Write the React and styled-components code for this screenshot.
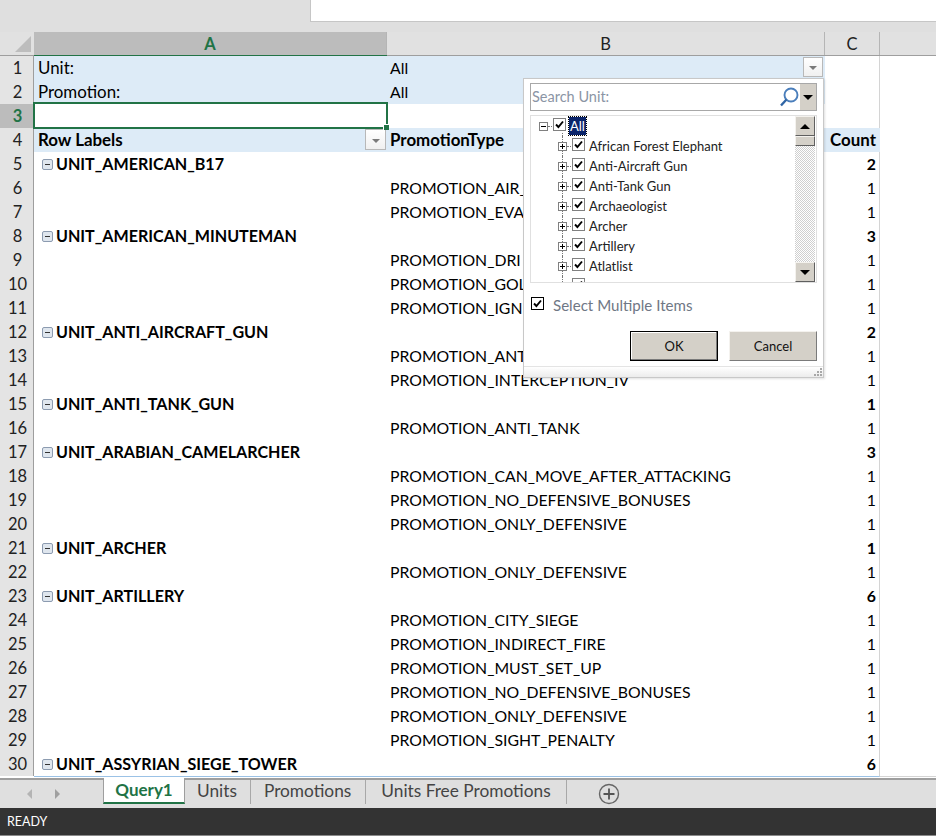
import React from 'react';
import styled, { createGlobalStyle } from 'styled-components';

const GlobalStyle = createGlobalStyle`
  html, body {
    margin: 0;
    padding: 0;
    background: #fff;
  }
  body {
    font-family: Lato, "Open Sans", sans-serif;
    color: #000;
  }
`;

const Page = styled.div`
  width: 936px;
  height: 836px;
  overflow: hidden;
  position: relative;
  display: flex;
  flex-direction: column;
`;

const TopBar = styled.div`
  height: 32px;
  flex: none;
  background: #dfdfdf;
  padding-left: 310px;
`;

const FormulaBox = styled.div`
  height: 21px;
  background: #fff;
  border-left: 1px solid #c6c6c6;
  border-bottom: 1px solid #c6c6c6;
`;

const HeaderRow = styled.div`
  height: 24px;
  flex: none;
  display: grid;
  grid-template-columns: 34px 353px 438px 55px 1fr;
  background: #e1e1e1;
  border-bottom: 1px solid #9e9e9e;
  box-sizing: border-box;
`;

const Corner = styled.div`
  display: flex;
  align-items: flex-end;
  justify-content: flex-end;
  padding: 0 3px 3px 0;
  background: #e1e1e1;
`;

const ColHead = styled.div`
  display: flex;
  align-items: center;
  justify-content: center;
  font-size: 16.5px;
  border-right: 1px solid #b5b5b5;
  box-sizing: border-box;
  color: ${p => (p.$active ? '#217346' : '#222')};
  font-weight: ${p => (p.$active ? 700 : 400)};
  background: ${p => (p.$active ? '#bcbcbc' : '#e1e1e1')};
  ${p => p.$active && 'box-shadow: 0 1px 0 0 #217346; height: 23px;'}
  ${p => p.$last && 'border-right: 0;'}
`;

const Rows = styled.div`
  flex: none;
`;

const Row = styled.div`
  height: 24px;
  display: grid;
  grid-template-columns: 34px 353px 438px 55px 1fr;
  font-size: 15.8px;
  line-height: 24px;
`;

const RowHead = styled.div`
  text-align: center;
  font-size: 16.5px;
  box-sizing: border-box;
  border-right: 1px solid #9e9e9e;
  border-bottom: 1px solid #c6c6c6;
  padding-left: 2px;
  color: ${p => (p.$active ? '#217346' : '#222')};
  font-weight: ${p => (p.$active ? 700 : 400)};
  background: ${p => (p.$active ? '#bcbcbc' : '#e4e4e4')};
`;

const Cell = styled.div`
  position: relative;
  box-sizing: border-box;
  white-space: nowrap;
  padding: 0 ${p => (p.$large ? 4 : 3)}px 0 ${p => (p.$first ? 4 : 3)}px;
  background: ${p => (p.$blue ? '#ddebf7' : '#fff')};
  font-weight: ${p => (p.$bold ? 700 : 400)};
  ${p => p.$large && 'font-size: 16.9px;'}
  text-align: ${p => (p.$right ? 'right' : 'left')};
  border-bottom: 1px solid ${p => (p.$line ? '#9bc2e6' : p.$grid ? '#d4d4d4' : 'transparent')};
  ${p => p.$divide && 'border-right: 1px solid #d4d4d4;'}
`;

const GroupLabel = styled.div`
  display: flex;
  align-items: center;
  gap: 3px;
  padding-left: 4px;
  font-size: 16.1px;
`;

const Collapse = styled.span`
  width: 11px;
  height: 11px;
  box-sizing: border-box;
  flex: none;
  border: 1px solid #8c9bb0;
  border-radius: 2px;
  background: #dfe6ee;
  display: flex;
  align-items: center;
  justify-content: center;
  &::before {
    content: '';
    width: 5px;
    height: 1px;
    background: #333;
  }
`;

const Selection = styled.div`
  position: absolute;
  z-index: 2;
  left: -1px;
  right: -1px;
  top: -2px;
  bottom: -1px;
  border: 2px solid #217346;
  &::after {
    content: '';
    position: absolute;
    right: -3px;
    bottom: -3px;
    width: 5px;
    height: 5px;
    background: #217346;
    border: 1px solid #fff;
    border-right: 0;
    border-bottom: 0;
  }
`;

const FilterButton = styled.div`
  position: absolute;
  z-index: 1;
  right: ${p => (p.$large ? 1 : 2)}px;
  top: 1px;
  width: ${p => (p.$large ? 21 : 20)}px;
  height: ${p => (p.$large ? 21 : 20)}px;
  box-sizing: border-box;
  background: linear-gradient(#fff, #f0f0f0);
  border: 1px solid #b8b8b8;
  display: flex;
  align-items: center;
  justify-content: center;
  &::before {
    content: '';
    margin-top: 2px;
    border-left: 4px solid transparent;
    border-right: 4px solid transparent;
    border-top: 4px solid #7a7a7a;
  }
`;

const Spacer = styled.div`
  flex: 1;
  background: #fff;
`;

const TabBar = styled.div`
  height: 30px;
  flex: none;
  display: flex;
  align-items: stretch;
  background: #dfdfdf;
  border-top: 2px solid #9e9e9e;
  box-sizing: border-box;
  font-size: 17.3px;
  color: #444;
`;

const NavArrows = styled.div`
  width: 103px;
  display: flex;
  align-items: center;
  padding-left: 27px;
  gap: 23px;
  box-sizing: border-box;
`;

const Arrow = styled.span`
  width: 0;
  height: 0;
  border-top: 5px solid transparent;
  border-bottom: 5px solid transparent;
  ${p => (p.$left ? 'border-right: 5px solid #b4b4b4;' : 'border-left: 5px solid #a0a0a0;')}
`;

const ActiveTab = styled.div`
  width: 82px;
  height: 26px;
  margin-top: -2px;
  box-sizing: border-box;
  background: #fff;
  border-left: 1px solid #9e9e9e;
  border-right: 1px solid #9e9e9e;
  border-bottom: 2px solid #217346;
  color: #217346;
  font-weight: 700;
  font-size: 17px;
  text-align: center;
  line-height: 24px;
`;

const Tab = styled.div`
  display: flex;
  align-items: center;
  height: 24px;
  padding: 0 ${p => p.$right}px 3px ${p => p.$left}px;
  box-sizing: border-box;
  border-right: 1px solid #a8a8a8;
  align-self: flex-start;
`;

const AddSheet = styled.div`
  margin-left: 31px;
  display: flex;
  align-items: center;
`;

const StatusBar = styled.div`
  height: 28px;
  flex: none;
  box-sizing: border-box;
  background: #333;
  border-bottom: 1px solid #8a8a8a;
  color: #fff;
  font-size: 12.5px;
  line-height: 27px;
  padding-left: 7px;
`;

const Popup = styled.div`
  position: absolute;
  z-index: 3;
  left: 523px;
  top: 78px;
  width: 301px;
  height: 300px;
  box-sizing: border-box;
  background: #fff;
  border: 1px solid #c8c8c8;
  box-shadow: 1px 1px 2px rgba(0, 0, 0, 0.12);
  display: flex;
  flex-direction: column;
  padding: 4px 6px 0;
  font-size: 13px;
  color: #222;
`;

const SearchBox = styled.div`
  height: 28px;
  flex: none;
  box-sizing: border-box;
  border: 1px solid #a8a8a8;
  display: flex;
  align-items: center;
  padding-left: 1px;
  color: #8b95a5;
  font-size: 14.5px;
`;

const SearchText = styled.span`
  flex: 1;
  margin-top: -2px;
`;

const SearchDrop = styled.div`
  width: 16px;
  height: 26px;
  margin-left: 1px;
  background: #d4d0c8;
  display: flex;
  align-items: center;
  justify-content: center;
  &::before {
    content: '';
    border-left: 5px solid transparent;
    border-right: 5px solid transparent;
    border-top: 5px solid #000;
  }
`;

const ListBox = styled.div`
  margin-top: 4px;
  height: 168px;
  flex: none;
  box-sizing: border-box;
  border: 1px solid #e0e0e0;
  display: flex;
  overflow: hidden;
`;

const Tree = styled.div`
  flex: 1;
  overflow: hidden;
`;

const TreeRow = styled.div`
  height: 20px;
  position: relative;
  display: flex;
  align-items: center;
  padding-left: ${p => (p.$root ? 8 : 27)}px;
  &::before {
    content: '';
    position: absolute;
    left: 31px;
    top: ${p => (p.$root ? 17 : 0)}px;
    bottom: 0;
    border-left: 1px dotted #777;
  }
`;

const Expander = styled.span`
  position: relative;
  z-index: 1;
  width: 9px;
  height: 9px;
  flex: none;
  box-sizing: border-box;
  border: 1px solid #808080;
  background: #fff;
  display: flex;
  align-items: center;
  justify-content: center;
  &::before {
    content: '';
    width: 5px;
    height: 1px;
    background: #000;
  }
  ${p => p.$plus && `
    &::after {
      content: '';
      position: absolute;
      left: 3px;
      top: 1px;
      width: 1px;
      height: 5px;
      background: #000;
    }
  `}
`;

const Connector = styled.span`
  width: 4px;
  flex: none;
  border-top: 1px dotted #777;
  margin-right: 1px;
`;

const CheckBox = styled.span`
  width: 13px;
  height: 13px;
  flex: none;
  box-sizing: border-box;
  border: 1px solid ${p => (p.$dark ? '#000' : '#808080')};
  background: #fff;
  display: flex;
  align-items: center;
  justify-content: center;
  margin-top: -3px;
`;

const ItemLabel = styled.span`
  margin-left: 4px;
  white-space: nowrap;
  ${p => p.$selected && `
    margin-left: 3px;
    padding: 0 1px;
    line-height: 18px;
    background: #0a246a;
    color: #fff;
    outline: 1px dotted #000;
  `}
`;

const ScrollBar = styled.div`
  width: 20px;
  flex: none;
  margin-right: 1px;
  display: flex;
  flex-direction: column;
  background-color: #e8e8e8;
  background-image: repeating-conic-gradient(#cfcfcf 0 25%, #fff 0 50%);
  background-size: 2px 2px;
`;

const ScrollButton = styled.div`
  height: 20px;
  flex: none;
  box-sizing: border-box;
  background: #d4d0c8;
  border: 1px solid;
  border-color: #f4f2ee #5f5f5f #5f5f5f #f4f2ee;
  display: flex;
  align-items: center;
  justify-content: center;
  &::before {
    content: '';
    border-left: 5px solid transparent;
    border-right: 5px solid transparent;
    ${p => (p.$up ? 'border-bottom: 5px solid #000;' : 'border-top: 5px solid #000;')}
  }
`;

const ScrollThumb = styled.div`
  height: 10px;
  flex: none;
  box-sizing: border-box;
  background: #d4d0c8;
  border: 1px solid;
  border-color: #f4f2ee #5f5f5f #5f5f5f #f4f2ee;
`;

const ScrollTrack = styled.div`
  flex: 1;
`;

const MultiRow = styled.div`
  display: flex;
  align-items: center;
  gap: 9px;
  margin-top: 14px;
  padding-left: 1px;
  font-size: 15.1px;
  color: #6f7785;
  height: 16px;
`;

const Buttons = styled.div`
  display: flex;
  justify-content: flex-end;
  gap: 11px;
  margin-top: 18px;
`;

const DialogButton = styled.div`
  width: 88px;
  height: 30px;
  box-sizing: border-box;
  background: #d4d0c8;
  font-size: 13px;
  color: #111;
  display: flex;
  align-items: center;
  justify-content: center;
  border: 1px solid;
  border-color: #f4f2ee #7a7a7a #7a7a7a #f4f2ee;
  ${p => p.$default && 'outline: 1px solid #000; outline-offset: -1px; border-color: #000; box-shadow: inset -1px -1px 0 #7a7a7a, inset 1px 1px 0 #fff;'}
`;

const Grip = styled.div`
  position: absolute;
  left: 0;
  right: 0;
  bottom: 0;
  height: 10px;
  border-top: 1px solid #e4e4e4;
  background: linear-gradient(#fff, #ececec);
  display: flex;
  justify-content: flex-end;
`;

const Check = () => (
  <svg width="9" height="9" viewBox="0 0 9 9">
    <path d="M1 4.5 L3.4 7 L8 1.5" fill="none" stroke="#000" strokeWidth="1.9" />
  </svg>
);

const GROUP = 'group';
const data = [
  [GROUP, 'UNIT_AMERICAN_B17', 2],
  ['PROMOTION_AIR_', 1],
  ['PROMOTION_EVA', 1],
  [GROUP, 'UNIT_AMERICAN_MINUTEMAN', 3],
  ['PROMOTION_DRI', 1],
  ['PROMOTION_GOL', 1],
  ['PROMOTION_IGN', 1],
  [GROUP, 'UNIT_ANTI_AIRCRAFT_GUN', 2],
  ['PROMOTION_ANT', 1],
  ['PROMOTION_INTERCEPTION_IV', 1],
  [GROUP, 'UNIT_ANTI_TANK_GUN', 1],
  ['PROMOTION_ANTI_TANK', 1],
  [GROUP, 'UNIT_ARABIAN_CAMELARCHER', 3],
  ['PROMOTION_CAN_MOVE_AFTER_ATTACKING', 1],
  ['PROMOTION_NO_DEFENSIVE_BONUSES', 1],
  ['PROMOTION_ONLY_DEFENSIVE', 1],
  [GROUP, 'UNIT_ARCHER', 1],
  ['PROMOTION_ONLY_DEFENSIVE', 1],
  [GROUP, 'UNIT_ARTILLERY', 6],
  ['PROMOTION_CITY_SIEGE', 1],
  ['PROMOTION_INDIRECT_FIRE', 1],
  ['PROMOTION_MUST_SET_UP', 1],
  ['PROMOTION_NO_DEFENSIVE_BONUSES', 1],
  ['PROMOTION_ONLY_DEFENSIVE', 1],
  ['PROMOTION_SIGHT_PENALTY', 1],
  [GROUP, 'UNIT_ASSYRIAN_SIEGE_TOWER', 6],
];

const units = [
  'African Forest Elephant',
  'Anti-Aircraft Gun',
  'Anti-Tank Gun',
  'Archaeologist',
  'Archer',
  'Artillery',
  'Atlatlist',
  '',
];

function DataRow({ number, row }) {
  if (row[0] === GROUP) {
    return (
      <Row>
        <RowHead>{number}</RowHead>
        <Cell $first $bold $line>
          <GroupLabel>
            <Collapse />
            {row[1]}
          </GroupLabel>
        </Cell>
        <Cell $line />
        <Cell $bold $right $line $divide>{row[2]}</Cell>
        <Cell $grid />
      </Row>
    );
  }
  return (
    <Row>
      <RowHead>{number}</RowHead>
      <Cell />
      <Cell>{row[0]}</Cell>
      <Cell $right $divide>{row[1]}</Cell>
      <Cell $grid />
    </Row>
  );
}

export default function App() {
  return (
    <Page>
      <GlobalStyle />
      <TopBar>
        <FormulaBox />
      </TopBar>
      <HeaderRow>
        <Corner>
          <svg width="16" height="16" viewBox="0 0 16 16">
            <path d="M16 0 V16 H0 Z" fill="#bdbdbd" />
          </svg>
        </Corner>
        <ColHead $active>A</ColHead>
        <ColHead>B</ColHead>
        <ColHead>C</ColHead>
        <ColHead $last />
      </HeaderRow>
      <Rows>
        <Row>
          <RowHead>1</RowHead>
          <Cell $first $blue $large>Unit:</Cell>
          <Cell $blue>
            All
            <FilterButton />
          </Cell>
          <Cell $grid $divide />
          <Cell $grid />
        </Row>
        <Row>
          <RowHead>2</RowHead>
          <Cell $first $blue $large>Promotion:</Cell>
          <Cell $blue>All</Cell>
          <Cell $grid $divide />
          <Cell $grid />
        </Row>
        <Row>
          <RowHead $active>3</RowHead>
          <Cell>
            <Selection />
          </Cell>
          <Cell $grid />
          <Cell $grid $divide />
          <Cell $grid />
        </Row>
        <Row>
          <RowHead>4</RowHead>
          <Cell $first $blue $bold $line $large>
            Row Labels
            <FilterButton $large />
          </Cell>
          <Cell $blue $bold $line $large>PromotionType</Cell>
          <Cell $blue $bold $right $line $large>Count</Cell>
          <Cell $grid />
        </Row>
        {data.map((row, i) => (
          <DataRow key={i} number={i + 5} row={row} />
        ))}
      </Rows>
      <Spacer />
      <TabBar>
        <NavArrows>
          <Arrow $left />
          <Arrow />
        </NavArrows>
        <ActiveTab>Query1</ActiveTab>
        <Tab $left={12} $right={13}>Units</Tab>
        <Tab $left={13} $right={14}>Promotions</Tab>
        <Tab $left={15} $right={15}>Units Free Promotions</Tab>
        <AddSheet>
          <svg width="22" height="22" viewBox="0 0 22 22">
            <circle cx="11" cy="11" r="9.5" fill="none" stroke="#666" strokeWidth="1.4" />
            <path d="M11 5.5 V16.5 M5.5 11 H16.5" stroke="#555" strokeWidth="1.8" />
          </svg>
        </AddSheet>
      </TabBar>
      <StatusBar>READY</StatusBar>
      <Popup>
        <SearchBox>
          <SearchText>Search Unit:</SearchText>
          <svg width="20" height="20" viewBox="0 0 20 20">
            <circle cx="12" cy="8" r="6.5" fill="none" stroke="#4a7ebb" strokeWidth="1.9" />
            <path d="M7.5 12.5 L2 18.5" stroke="#2f65a5" strokeWidth="2.4" />
          </svg>
          <SearchDrop />
        </SearchBox>
        <ListBox>
          <Tree>
            <TreeRow $root>
              <Expander />
              <Connector />
              <CheckBox><Check /></CheckBox>
              <ItemLabel $selected>All</ItemLabel>
            </TreeRow>
            {units.map((unit, i) => (
              <TreeRow key={i}>
                <Expander $plus />
                <Connector />
                <CheckBox><Check /></CheckBox>
                <ItemLabel>{unit}</ItemLabel>
              </TreeRow>
            ))}
          </Tree>
          <ScrollBar>
            <ScrollButton $up />
            <ScrollThumb />
            <ScrollTrack />
            <ScrollButton />
          </ScrollBar>
        </ListBox>
        <MultiRow>
          <CheckBox $dark><Check /></CheckBox>
          Select Multiple Items
        </MultiRow>
        <Buttons>
          <DialogButton $default>OK</DialogButton>
          <DialogButton>Cancel</DialogButton>
        </Buttons>
        <Grip>
          <svg width="10" height="9" viewBox="0 0 10 9">
            <path d="M7 1h2v2H7zM4 4h2v2H4zM7 4h2v2H7zM1 7h2v2H1zM4 7h2v2H4zM7 7h2v2H7z" fill="#a8a8a8" />
          </svg>
        </Grip>
      </Popup>
    </Page>
  );
}
